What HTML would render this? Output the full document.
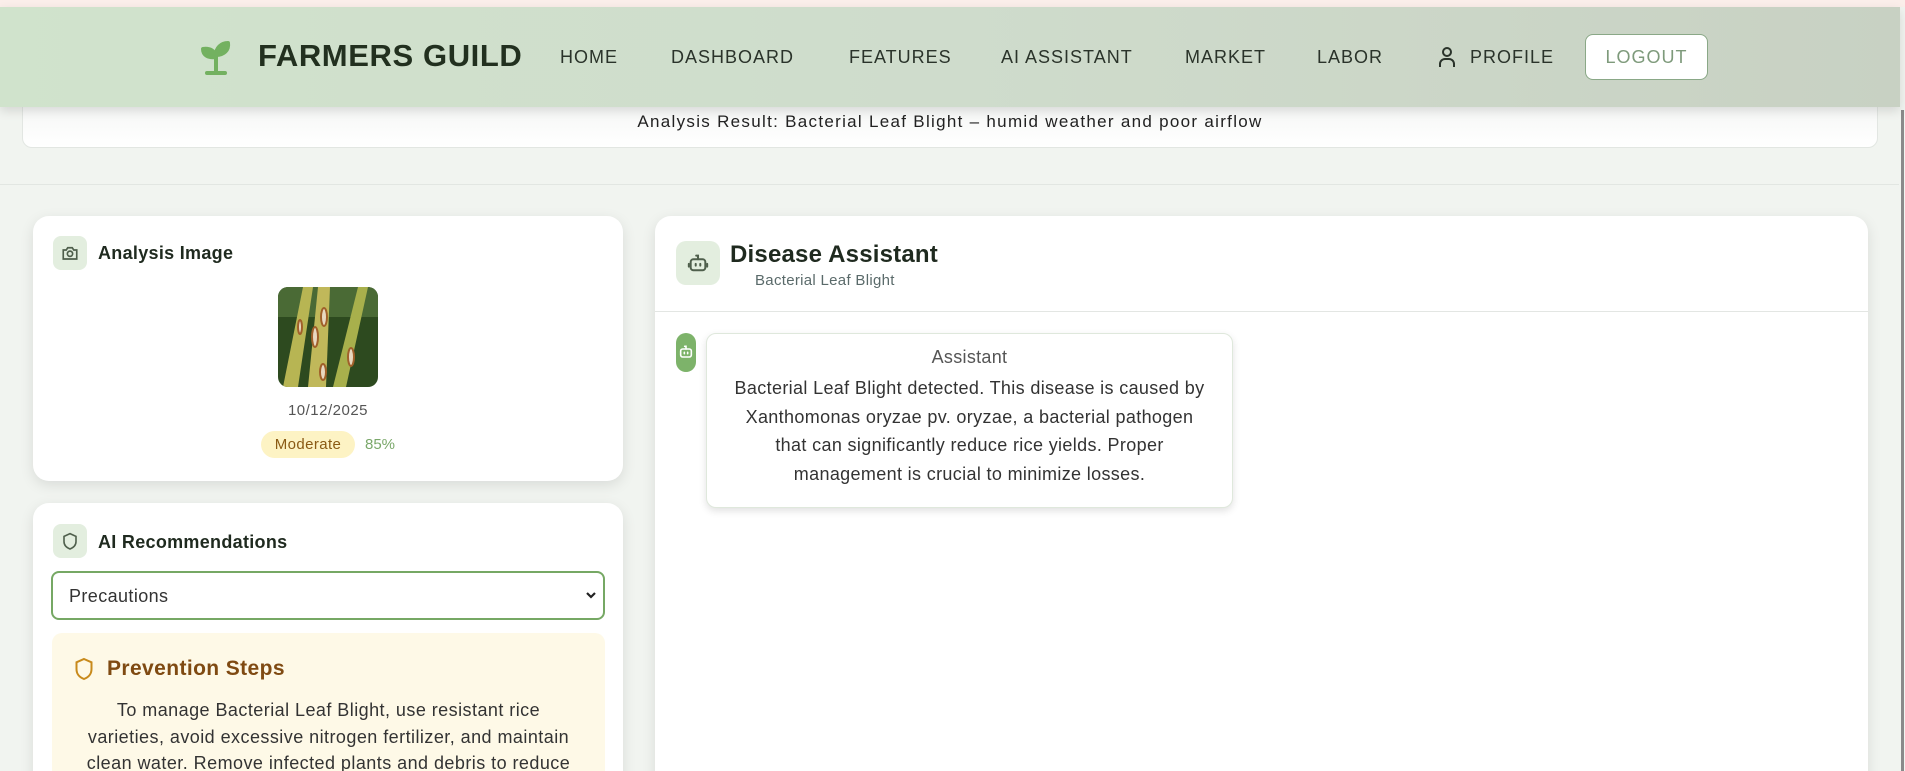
<!DOCTYPE html>
<html><head><meta charset="utf-8">
<style>
*{box-sizing:border-box;margin:0;padding:0}
html,body{width:1905px;height:771px;overflow:hidden}
body{font-family:"Liberation Sans",sans-serif;background:#f1f4f0;position:relative;color:#2b2b2b}
.abs{position:absolute}
.top{left:0;top:0;width:1905px;height:7px;background:#fbeeea}
.hdr{left:0;top:7px;width:1900px;height:100px;background:linear-gradient(90deg,#d0e3cc 0%,#cfdccc 50%,#c8d1c3 100%);box-shadow:0 4px 10px rgba(0,0,0,.12);z-index:5}
.brand{left:258px;font-size:31px;font-weight:bold;color:#22301f;letter-spacing:.6px}
.nav{font-size:18px;color:#2a332a;letter-spacing:1px}
.logout{left:1585px;width:123px;height:46px;border:1px solid #8aa887;border-radius:8px;background:#fff;color:#7e9a7b;font-size:18px;text-align:center;line-height:44px;letter-spacing:1px}
.res{left:22px;top:90px;width:1856px;height:58px;background:linear-gradient(#f2f4f2,#fff);border:1px solid #e2e6e2;border-radius:0 0 10px 10px;text-align:center;font-size:17px;padding-top:21px;color:#222;letter-spacing:1.3px}
.hr{left:0;top:184px;width:1899px;height:1px;background:#e2e6e2}
.card{background:#fff;border-radius:16px;box-shadow:0 4px 14px rgba(0,0,0,.1)}
.ibox{background:#e3eedf;border-radius:8px}
.ttl{font-size:18px;font-weight:bold;color:#1f2a1f;letter-spacing:.3px}
.nw{white-space:nowrap}
</style></head><body>
<div class="abs top"></div>
<div class="abs hdr">
  <svg class="abs" style="left:198px;top:30px" width="36" height="40" viewBox="0 0 36 40" fill="none" stroke="#73b160" stroke-width="4" stroke-linecap="round" stroke-linejoin="round">
    <path d="M18 36V20"/><path d="M9 36h18"/>
    <path d="M18 20c-1-6-6-9-13-8 0 6 5 9 13 8z" fill="#73b160"/>
    <path d="M18 18c0-7 5-12 12-12 1 7-4 12-12 12z" fill="#73b160"/>
  </svg>
  <div class="abs brand" style="top:31px">FARMERS GUILD</div>
  <div class="abs nav" style="left:560px;top:40px">HOME</div>
  <div class="abs nav" style="left:671px;top:40px">DASHBOARD</div>
  <div class="abs nav" style="left:849px;top:40px">FEATURES</div>
  <div class="abs nav" style="left:1001px;top:40px">AI ASSISTANT</div>
  <div class="abs nav" style="left:1185px;top:40px">MARKET</div>
  <div class="abs nav" style="left:1317px;top:40px">LABOR</div>
  <svg class="abs" style="left:1437px;top:39px" width="20" height="22" viewBox="0 0 20 22" fill="none" stroke="#2a332a" stroke-width="2"><circle cx="10" cy="6" r="4"/><path d="M3 21v-3a5 5 0 0 1 5-5h4a5 5 0 0 1 5 5v3"/></svg>
  <div class="abs nav" style="left:1470px;top:40px">PROFILE</div>
  <div class="abs logout" style="top:27px">LOGOUT</div>
</div>
<div class="abs res">Analysis Result: Bacterial Leaf Blight – humid weather and poor airflow</div>
<div class="abs hr"></div>
<div class="abs" style="left:1901px;top:110px;width:3px;height:661px;background:#8a8a8a"></div>

<!-- card 1 -->
<div class="abs card" style="left:33px;top:216px;width:590px;height:265px">
  <div class="abs ibox" style="left:20px;top:20px;width:34px;height:34px">
    <svg class="abs" style="left:8px;top:8px" width="18" height="18" viewBox="0 0 24 24" fill="none" stroke="#4f5f4c" stroke-width="2.2"><path d="M3 8h4l2-3h6l2 3h4v12H3z"/><circle cx="12" cy="13" r="3.5"/></svg>
  </div>
  <div class="abs ttl" style="left:65px;top:27px">Analysis Image</div>
  <svg class="abs" style="left:245px;top:71px;border-radius:10px" width="100" height="100" viewBox="0 0 100 100">
    <rect width="100" height="100" fill="#2d4a1f"/>
    <rect x="0" y="0" width="100" height="30" fill="#4a6a35"/>
    <path d="M5 100L25 0h10L20 100z" fill="#b7b553"/>
    <path d="M30 100L40 0h12L48 100z" fill="#c0b85a"/>
    <path d="M55 100L80 0h10L68 100z" fill="#a8b04c"/>
    <ellipse cx="37" cy="50" rx="3" ry="10" fill="#e8d8c0" stroke="#a0602a" stroke-width="2"/>
    <ellipse cx="46" cy="30" rx="3" ry="9" fill="#e8d8c0" stroke="#a0602a" stroke-width="2"/>
    <ellipse cx="22" cy="40" rx="2" ry="7" fill="#e8d8c0" stroke="#a0602a" stroke-width="2"/>
    <ellipse cx="73" cy="70" rx="3" ry="9" fill="#e8d8c0" stroke="#a0602a" stroke-width="2"/>
    <ellipse cx="45" cy="85" rx="3" ry="8" fill="#e8d8c0" stroke="#a0602a" stroke-width="2"/>
  </svg>
  <div class="abs" style="left:0;width:590px;top:186px;text-align:center;font-size:15px;color:#555;letter-spacing:.5px">10/12/2025</div>
  <div class="abs" style="left:228px;top:215px;width:94px;height:27px;border-radius:14px;background:#fdf3c4;color:#8a5a14;font-size:15px;text-align:center;line-height:27px;letter-spacing:.4px">Moderate</div>
  <div class="abs" style="left:332px;top:220px;font-size:15px;color:#7aa86a">85%</div>
</div>

<!-- card 2 -->
<div class="abs card" style="left:33px;top:503px;width:590px;height:300px">
  <div class="abs ibox" style="left:20px;top:21px;width:34px;height:34px">
    <svg class="abs" style="left:9px;top:8px" width="16" height="18" viewBox="0 0 24 26" fill="none" stroke="#4f5f4c" stroke-width="2.4"><path d="M12 2l9 4v8c0 6-4 9-9 11-5-2-9-5-9-11V6z"/></svg>
  </div>
  <div class="abs ttl" style="left:65px;top:29px">AI Recommendations</div>
  <div class="abs" style="left:18px;top:68px;width:554px;height:49px;border:2.5px solid #76a864;border-radius:8px;font-size:18px;color:#333;padding:13px 0 0 16px;letter-spacing:.4px">Precautions
    <svg class="abs" style="right:6px;top:17px" width="12" height="10" viewBox="0 0 12 10" fill="none" stroke="#222" stroke-width="2.2"><path d="M2 3l4 4 4-4"/></svg>
  </div>
  <div class="abs" style="left:19px;top:130px;width:553px;height:200px;background:#fef9e7;border-radius:10px">
    <svg class="abs" style="left:22px;top:24px" width="20" height="24" viewBox="0 0 24 28" fill="none" stroke="#c88a1c" stroke-width="2.4"><path d="M12 2l9 4v8c0 7-4 10-9 12-5-2-9-5-9-12V6z"/></svg>
    <div class="abs" style="left:55px;top:24px;font-size:21px;font-weight:bold;color:#7f4a12;letter-spacing:.4px">Prevention Steps</div>
    <div class="abs nw" style="left:0;width:553px;top:64px;text-align:center;font-size:18px;line-height:26.5px;color:#333;letter-spacing:.45px">To manage Bacterial Leaf Blight, use resistant rice<br>varieties, avoid excessive nitrogen fertilizer, and maintain<br>clean water. Remove infected plants and debris to reduce</div>
  </div>
</div>

<!-- right card -->
<div class="abs card" style="left:655px;top:216px;width:1213px;height:600px">
  <div class="abs ibox" style="left:21px;top:25px;width:44px;height:44px;border-radius:10px">
    <svg class="abs" style="left:11px;top:10px" width="22" height="22" viewBox="0 0 24 24" fill="none" stroke="#4f5f4c" stroke-width="2.2" stroke-linecap="round"><rect x="4" y="9" width="16" height="12" rx="3"/><path d="M12 9V5h-2"/><path d="M2 14v3M22 14v3M9.5 14v2M14.5 14v2"/></svg>
  </div>
  <div class="abs" style="left:75px;top:25px;font-size:24px;font-weight:bold;color:#1f2a1f;letter-spacing:.2px">Disease Assistant</div>
  <div class="abs" style="left:100px;top:56px;font-size:15px;color:#5a6a6a;letter-spacing:.3px">Bacterial Leaf Blight</div>
  <div class="abs" style="left:0;top:95px;width:1213px;height:1px;background:#e3e6e3"></div>
  <div class="abs" style="left:21px;top:117px;width:20px;height:39px;border-radius:10px;background:#7db36a">
    <svg class="abs" style="left:2px;top:10px" width="16" height="16" viewBox="0 0 24 24" fill="none" stroke="#fff" stroke-width="2.4" stroke-linecap="round"><rect x="4" y="9" width="16" height="12" rx="3"/><path d="M12 9V5h-2"/><path d="M9.5 14v2M14.5 14v2"/></svg>
  </div>
  <div class="abs" style="left:51px;top:117px;width:527px;height:175px;border:1px solid #dfe8dc;border-radius:10px;box-shadow:0 3px 8px rgba(0,0,0,.12);background:#fff">
    <div class="abs" style="left:0;width:525px;top:13px;text-align:center;font-size:18px;color:#555;letter-spacing:.3px">Assistant</div>
    <div class="abs nw" style="left:0;width:525px;top:40px;text-align:center;font-size:18px;line-height:28.5px;color:#333;letter-spacing:.35px">Bacterial Leaf Blight detected. This disease is caused by<br>Xanthomonas oryzae pv. oryzae, a bacterial pathogen<br>that can significantly reduce rice yields. Proper<br>management is crucial to minimize losses.</div>
  </div>
</div>
</body></html>
